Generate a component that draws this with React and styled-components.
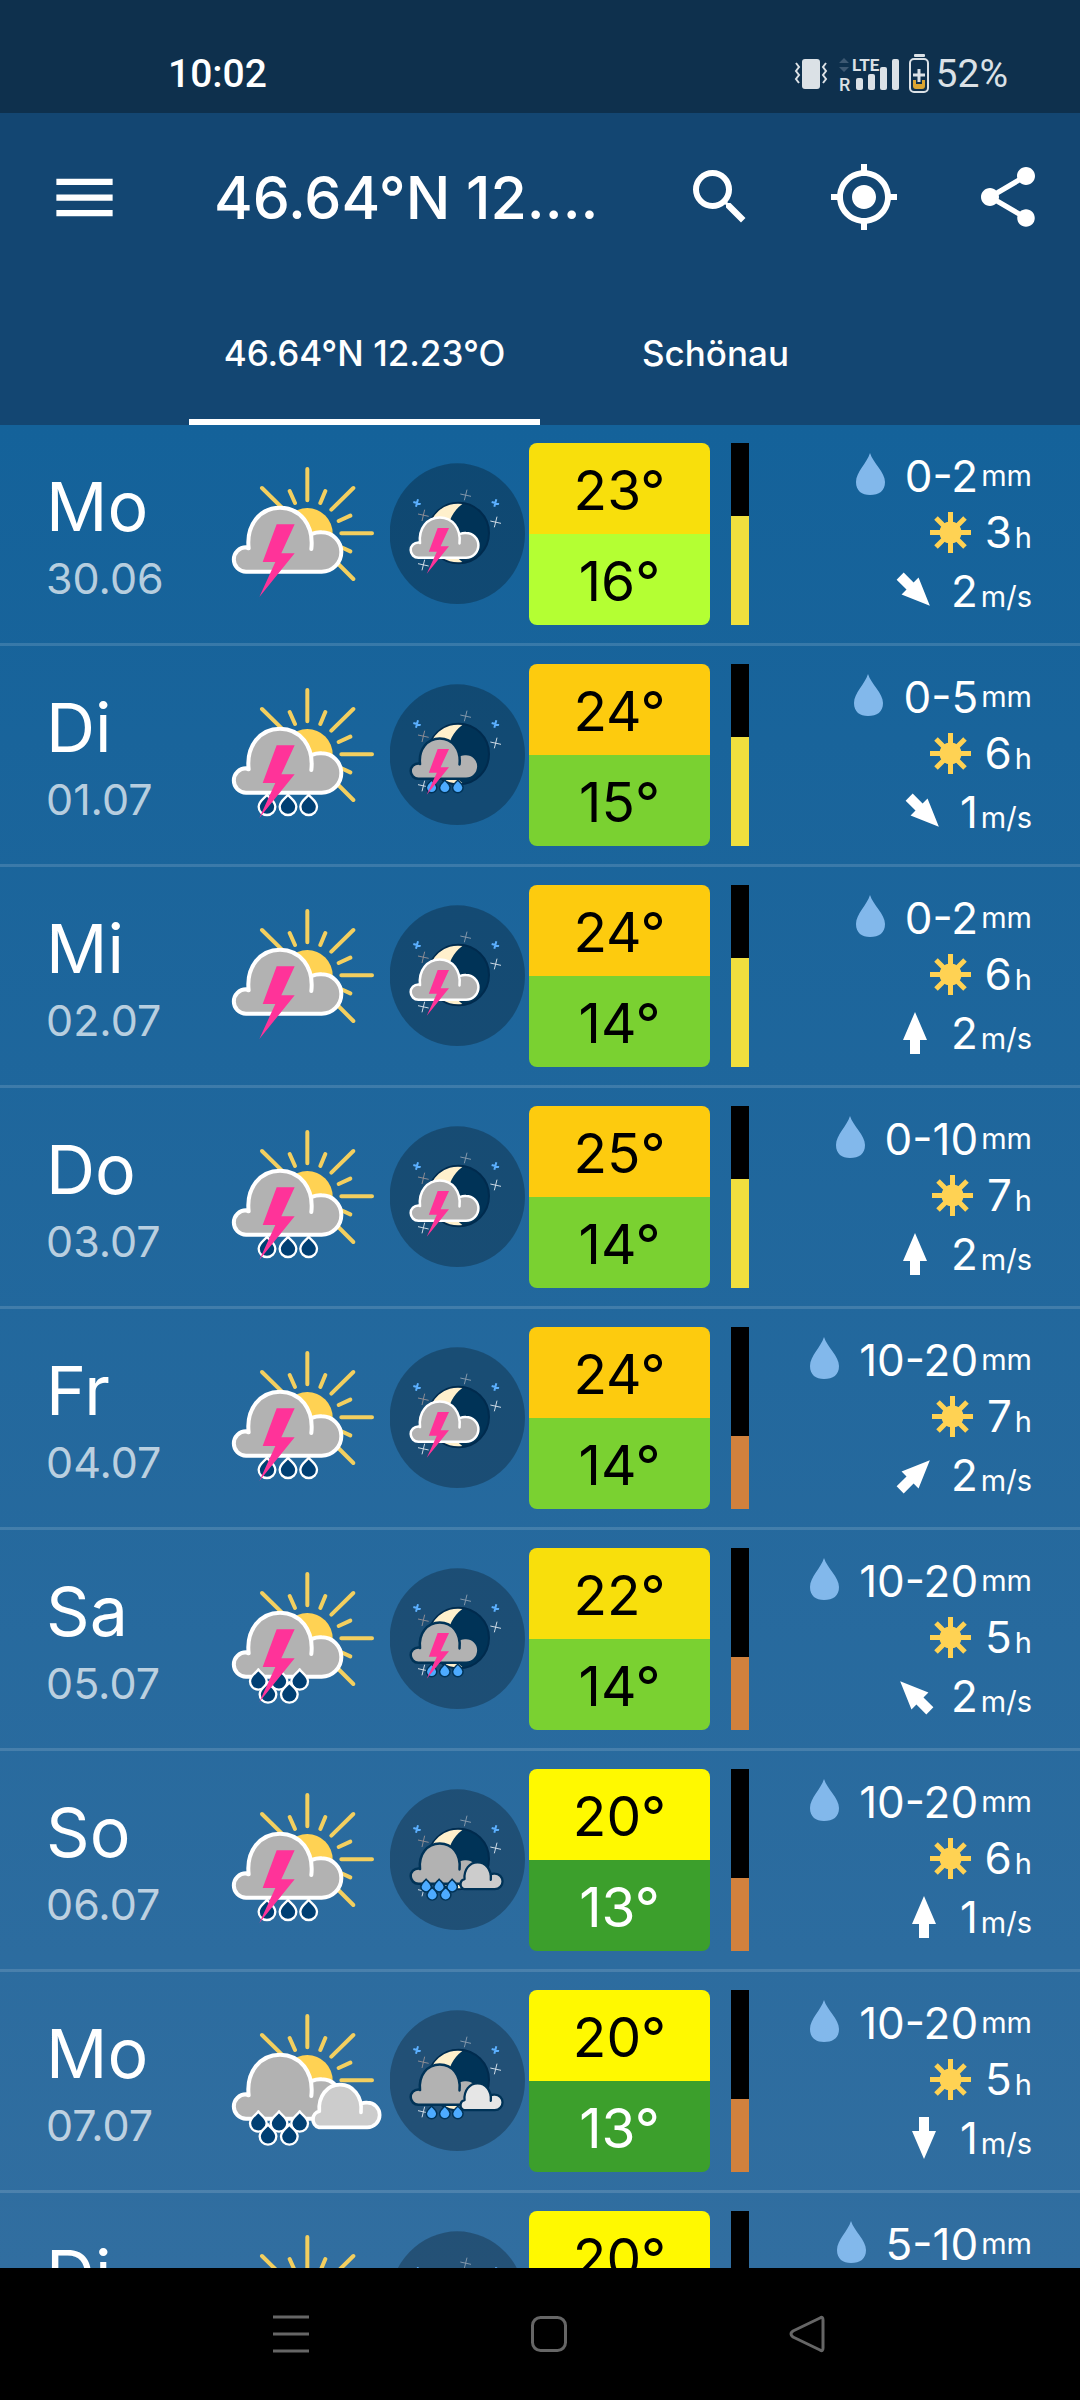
import React from 'react';
import styled, { createGlobalStyle } from 'styled-components';
import { MdMenu, MdSearch, MdMyLocation, MdShare } from 'react-icons/md';

const GlobalStyle = createGlobalStyle`
  * {
    box-sizing: border-box;
  }

  body {
    margin: 0;
    background: #000;
    color: #fff;
    font-family: Inter, 'Liberation Sans', sans-serif;
  }

  button {
    margin: 0;
    padding: 0;
    border: 0;
    background: none;
    color: inherit;
    font: inherit;
    cursor: pointer;
  }

  svg {
    display: block;
    flex-shrink: 0;
  }
`;

const Page = styled.div`
  display: flex;
  flex-direction: column;
  height: 100vh;
`;

const StatusBar = styled.div`
  display: flex;
  align-items: center;
  justify-content: space-between;
  height: 113px;
  padding: 34px 72px 0 168px;
  background: #0e304d;
  font-family: Roboto, sans-serif;
  font-size: 39px;
  font-weight: 500;
  flex-shrink: 0;
`;

const StatusIcons = styled.div`
  display: flex;
  align-items: center;
  color: #dbe1e6;
`;

const Battery = styled.span`
  padding-left: 6px;
  font-weight: 400;
`;

const Header = styled.header`
  background: #134672;
  flex-shrink: 0;
`;

const Toolbar = styled.div`
  display: flex;
  align-items: center;
  height: 168px;
`;

const MenuButton = styled.button`
  display: flex;
  justify-content: center;
  width: 168px;
`;

const ToolButton = styled.button`
  display: flex;
  justify-content: center;
  width: 144px;
`;

const Title = styled.h1`
  flex: 1;
  min-width: 0;
  margin: 0;
  padding-left: 46px;
  font-size: 59px;
  font-weight: 500;
  white-space: nowrap;
`;

const Tabs = styled.nav`
  display: flex;
  justify-content: center;
  height: 144px;
`;

const Tab = styled.button`
  width: 351px;
  padding-top: 6px;
  border-bottom: 6px solid ${props => (props.$active ? '#fff' : 'transparent')};
  font-size: 35px;
  font-weight: 500;
  white-space: nowrap;
`;

const Forecast = styled.main`
  flex: 1;
  min-height: 0;
  overflow: hidden;
  background: linear-gradient(to bottom, #14629a, #316ea0);
`;

const Row = styled.section`
  display: flex;
  align-items: center;
  height: 221px;
  padding-right: 48px;
  border-bottom: 3px solid rgba(255, 255, 255, 0.14);
`;

const DateBlock = styled.div`
  width: 210px;
  padding-left: 46px;
`;

const DayName = styled.div`
  font-size: 68px;
  line-height: 88px;
`;

const DayDate = styled.div`
  font-size: 43px;
  line-height: 56px;
  color: rgba(255, 255, 255, 0.7);
`;

const Temps = styled.div`
  width: 181px;
  margin-left: 4px;
  border-radius: 8px;
  overflow: hidden;
`;

const Temp = styled.div`
  height: 91px;
  padding-top: 2px;
  background: ${props => props.$bg};
  color: ${props => (props.$light ? '#fff' : '#000')};
  font-size: 55px;
  line-height: 91px;
  text-align: center;
`;

const Gauge = styled.div`
  display: flex;
  align-items: flex-end;
  width: 18px;
  height: 182px;
  margin-left: 21px;
  background: #000;
`;

const GaugeFill = styled.div`
  width: 100%;
  height: ${props => props.$level}%;
  background: ${props => (props.$level > 50 ? '#f0df3e' : '#d1813d')};
`;

const Details = styled.div`
  flex: 1;
  padding-top: 2px;
`;

const Detail = styled.div`
  display: flex;
  align-items: center;
  justify-content: flex-end;
  gap: ${props => props.$gap}px;
  height: 59px;
`;

const Value = styled.div`
  display: flex;
  align-items: ${props => (props.$centered ? 'center' : 'baseline')};
  gap: 3px;
  font-size: 44px;
  line-height: 58px;
`;

const Unit = styled.span`
  font-size: 29px;
`;

const NavBar = styled.nav`
  display: flex;
  align-items: center;
  justify-content: center;
  height: 132px;
  padding-left: 18px;
  background: #000;
  flex-shrink: 0;
`;

const NavButton = styled.button`
  display: flex;
  justify-content: center;
  width: 258px;
`;

const CLOUD =
  'M304 372 C312 300 270 248 210 248 C150 248 108 300 116 370 L108 367 A36 36 0 0 0 108 440 H335 A59 59 0 0 0 335 322 Q320 321 308 326';
const SMALL_CLOUD =
  'M453 421 C458 372 428 338 390 338 C352 338 324 372 328 418 A25 25 0 0 0 326 466 H472 A37 37 0 0 0 472 392 Q462 391 454 395';
const DROP = 'M0 -32 C-5 -23 -25 -13 -25 4 A25 25 0 0 0 25 4 C25 -13 5 -23 0 -32 Z';

const DROPS = {
  3: [[171, 478], [234, 478], [296, 478]],
  5: [[145, 450], [207, 450], [269, 450], [174, 489], [238, 489]],
};

const Clouds = ({ bolt, drops, extra, outline, dropColor, dropOutline, extraColor }) => (
  <g strokeLinecap="round" strokeLinejoin="round">
    <path d={CLOUD} fill="#b2b2b2" stroke={outline} strokeWidth="12" />
    {(DROPS[drops] || []).map(([x, y]) => (
      <path
        key={`${x}-${y}`}
        d={DROP}
        transform={`translate(${x} ${y})`}
        fill={dropColor}
        stroke={dropOutline}
        strokeWidth="7"
      />
    ))}
    {extra && <path d={SMALL_CLOUD} fill={extraColor} stroke={outline} strokeWidth="11" />}
    {bolt && <path d="M200 298 H254 L214 385 H254 L148 516 L196 411 H158 Z" fill="#ff3399" />}
  </g>
);

const DayIcon = (props) => (
  <svg width="180" height="218" viewBox="0 0 540 654" aria-hidden="true">
    <path
      d="M292 132V226 M394 325H486 M364 254L430 189 M156 189L222 254 M364 396L430 462 M239 198L255 234 M346 198L331 234 M386 288L421 272 M386 363L421 379"
      fill="none"
      stroke="#f3cf5f"
      strokeWidth="12"
      strokeLinecap="round"
    />
    <circle cx="292" cy="325" r="76" fill="#ffd253" />
    <Clouds extraColor="#ccc" {...props} outline="#fff" dropColor="#003f73" dropOutline="#fff" />
  </svg>
);

const NightIcon = ({ outline = '#fff', ...props }) => (
  <svg width="135" height="218" viewBox="540 0 405 654" aria-hidden="true">
    <ellipse cx="742" cy="326" rx="203" ry="211" fill="rgba(0, 0, 0, 0.26)" />
    <g fill="none" strokeWidth="3">
      <path d="M771 194L763 226 M751 207L783 214" stroke="#8297ab" />
      <path d="M644 254L636 288 M624 267L656 274" stroke="#8c8c94" />
      <path d="M861 275L853 307 M841 288L873 295" stroke="#cfdbe6" />
      <path d="M644 404L636 436 M624 416L656 423" stroke="#cfdbe6" />
      <path d="M624 223L618 245 M610 231L632 237 M859 223L853 245 M845 231L867 237" stroke="#5cb0ff" strokeWidth="6" />
    </g>
    <circle cx="746" cy="324" r="91" fill="#003357" stroke="#002b4e" strokeWidth="6" />
    <path d="M757 237 A88 88 0 1 0 757 411 A108 108 0 0 1 757 237 Z" fill="#fff0cc" />
    <g transform="translate(557 121) scale(0.63)">
      <Clouds {...props} outline={outline} dropColor="#4dabff" dropOutline="#003357" />
    </g>
  </svg>
);

const DropIcon = () => (
  <svg width="29" height="46" viewBox="0 0 29 46" aria-hidden="true">
    <path d="M14 0 C17 10 29 19 29 29 C29 38 23 42 14 42 C6 42 0 38 0 29 C0 19 11 10 14 0 Z" fill="#82b8eb" />
  </svg>
);

const SunIcon = () => (
  <svg width="41" height="46" viewBox="0 0 41 46" aria-hidden="true">
    <circle cx="20.5" cy="20.5" r="11" fill="#ffd253" />
    <path
      d="M20.5 0V41 M0 20.5H41 M6 6L35 35 M35 6L6 35"
      stroke="#ffd253"
      strokeWidth="5"
    />
  </svg>
);

const WindIcon = ({ angle }) => (
  <svg width="44" height="50" viewBox="0 0 44 50" aria-hidden="true">
    <path
      d="M22 1 L34 29 H27 V43 H17 V29 H10 Z"
      fill="#fff"
      transform={`rotate(${angle} 22 22)`}
    />
  </svg>
);

const VibrateIcon = () => (
  <svg width="34" height="32" viewBox="0 0 34 32" aria-hidden="true">
    <rect x="8" y="1" width="18" height="30" rx="3" fill="currentColor" />
    <path
      d="M2 5L5 9L2 13L5 17L2 21L5 25 M32 5L29 9L32 13L29 17L32 21L29 25"
      fill="none"
      stroke="currentColor"
      strokeWidth="2"
    />
  </svg>
);

const SignalIcon = () => (
  <svg width="80" height="40" viewBox="-11 0 80 40" aria-hidden="true">
    <path d="M0 9L5 4L10 9Z M0 13L5 18L10 13Z" fill="#3d5872" />
    <text x="13" y="17" fontSize="17" fontWeight="700" fill="currentColor">LTE</text>
    <text x="0" y="37" fontSize="18" fontWeight="500" fill="currentColor">R</text>
    <g fill="currentColor">
      <rect x="17" y="24" width="7" height="12" rx="2" />
      <rect x="29" y="20" width="7" height="16" rx="2" />
      <rect x="41" y="13" width="7" height="23" rx="2" />
      <rect x="53" y="5" width="7" height="31" rx="2" />
    </g>
  </svg>
);

const BatteryIcon = () => (
  <svg width="22" height="40" viewBox="0 0 22 40" aria-hidden="true">
    <rect x="6" y="0" width="11" height="3" rx="1" fill="currentColor" />
    <rect x="2" y="5" width="18" height="33" rx="4" fill="none" stroke="currentColor" strokeWidth="2" />
    <path d="M5 26H17V32Q17 35 14 35H8Q5 35 5 32Z" fill="#dba531" />
    <path d="M11 14V30 M4 21H18" stroke="#0e304d" strokeWidth="6" />
    <path d="M11 15V28 M5 21H17" stroke="currentColor" strokeWidth="3" />
  </svg>
);

const days = [
  { name: 'Mo', date: '30.06', day: { bolt: true }, night: { bolt: true }, max: 23, maxBg: '#f8df0c', min: 16, minBg: '#b4ff33', level: 60, rain: '0-2', sun: 3, wind: 2, angle: 135 },
  { name: 'Di', date: '01.07', day: { bolt: true, drops: 3 }, night: { bolt: true, drops: 3, outline: '#003357' }, max: 24, maxBg: '#fdcb0e', min: 15, minBg: '#7ad131', level: 60, rain: '0-5', sun: 6, wind: 1, angle: 135 },
  { name: 'Mi', date: '02.07', day: { bolt: true }, night: { bolt: true }, max: 24, maxBg: '#fdcb0e', min: 14, minBg: '#7ad131', level: 60, rain: '0-2', sun: 6, wind: 2, angle: 0 },
  { name: 'Do', date: '03.07', day: { bolt: true, drops: 3 }, night: { bolt: true }, max: 25, maxBg: '#fdcb0e', min: 14, minBg: '#7ad131', level: 60, rain: '0-10', sun: 7, wind: 2, angle: 0 },
  { name: 'Fr', date: '04.07', day: { bolt: true, drops: 3 }, night: { bolt: true }, max: 24, maxBg: '#fdcb0e', min: 14, minBg: '#7ad131', level: 40, rain: '10-20', sun: 7, wind: 2, angle: 45 },
  { name: 'Sa', date: '05.07', day: { bolt: true, drops: 5 }, night: { bolt: true, drops: 3, outline: '#003357' }, max: 22, maxBg: '#f8df0c', min: 14, minBg: '#7ad131', level: 40, rain: '10-20', sun: 5, wind: 2, angle: -45 },
  { name: 'So', date: '06.07', day: { bolt: true, drops: 3 }, night: { drops: 5, extra: true, extraColor: '#ccc', outline: '#003357' }, max: 20, maxBg: '#fff900', min: 13, minBg: '#3c9f2c', light: true, level: 40, rain: '10-20', sun: 6, wind: 1, angle: 0 },
  { name: 'Mo', date: '07.07', day: { drops: 5, extra: true }, night: { drops: 3, extra: true, extraColor: '#e6e6e6', outline: '#003357' }, max: 20, maxBg: '#fff900', min: 13, minBg: '#3c9f2c', light: true, level: 40, rain: '10-20', sun: 5, wind: 1, angle: 180 },
  { name: 'Di', date: '08.07', day: { bolt: true, drops: 3 }, night: { bolt: true }, max: 20, maxBg: '#fff900', min: 13, minBg: '#3c9f2c', light: true, level: 40, rain: '5-10', sun: 6, wind: 1, angle: 0 },
];

const DayRow = ({ item }) => (
  <Row>
    <DateBlock>
      <DayName>{item.name}</DayName>
      <DayDate>{item.date}</DayDate>
    </DateBlock>
    <DayIcon {...item.day} />
    <NightIcon {...item.night} />
    <Temps>
      <Temp $bg={item.maxBg}>{item.max}°</Temp>
      <Temp $bg={item.minBg} $light={item.light}>{item.min}°</Temp>
    </Temps>
    <Gauge>
      <GaugeFill $level={item.level} />
    </Gauge>
    <Details>
      <Detail $gap={20}>
        <DropIcon />
        <Value $centered>{item.rain}<Unit>mm</Unit></Value>
      </Detail>
      <Detail $gap={14}>
        <SunIcon />
        <Value>{item.sun}<Unit>h</Unit></Value>
      </Detail>
      <Detail $gap={14}>
        <WindIcon angle={item.angle} />
        <Value>{item.wind}<Unit>m/s</Unit></Value>
      </Detail>
    </Details>
  </Row>
);

const App = () => (
  <>
    <GlobalStyle />
    <Page>
      <StatusBar>
        <span>10:02</span>
        <StatusIcons>
          <VibrateIcon />
          <SignalIcon />
          <BatteryIcon />
          <Battery>52%</Battery>
        </StatusIcons>
      </StatusBar>
      <Header>
        <Toolbar>
          <MenuButton aria-label="Menü"><MdMenu size={75} /></MenuButton>
          <Title>46.64°N 12....</Title>
          <ToolButton aria-label="Suchen"><MdSearch size={72} /></ToolButton>
          <ToolButton aria-label="Standort"><MdMyLocation size={72} /></ToolButton>
          <ToolButton aria-label="Teilen"><MdShare size={72} /></ToolButton>
        </Toolbar>
        <Tabs>
          <Tab $active>46.64°N 12.23°O</Tab>
          <Tab>Schönau</Tab>
        </Tabs>
      </Header>
      <Forecast>
        {days.map(item => (
          <DayRow key={item.date} item={item} />
        ))}
      </Forecast>
      <NavBar>
        <NavButton aria-label="Letzte Apps">
          <svg width="36" height="38" viewBox="0 0 36 38" fill="none" stroke="#666" strokeWidth="3">
            <path d="M0 2H36 M0 19H36 M0 36H36" />
          </svg>
        </NavButton>
        <NavButton aria-label="Startseite">
          <svg width="36" height="38" viewBox="0 0 36 38" fill="none" stroke="#666" strokeWidth="3">
            <rect x="1.5" y="2.5" width="33" height="33" rx="8" />
          </svg>
        </NavButton>
        <NavButton aria-label="Zurück">
          <svg width="36" height="38" viewBox="0 0 36 38" fill="none" stroke="#666" strokeWidth="3" strokeLinejoin="round">
            <path d="M31 3Q34 1 34 5V33Q34 37 31 35L4 22Q0 19 4 16Z" />
          </svg>
        </NavButton>
      </NavBar>
    </Page>
  </>
);

export default App;
